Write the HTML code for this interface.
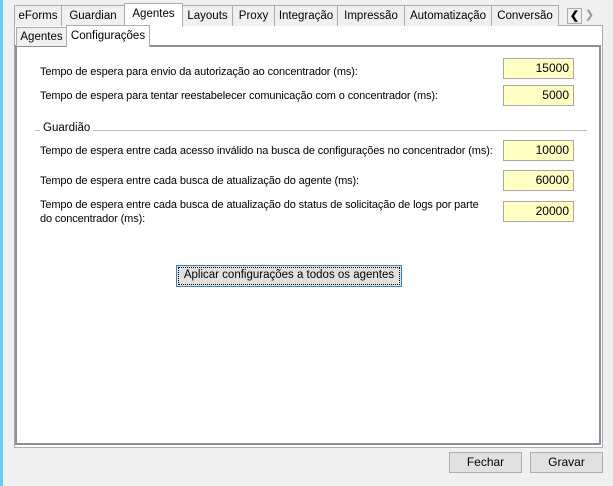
<!DOCTYPE html>
<html><head><style>
body{margin:0;width:613px;height:486px;background:#f0f0f0;position:relative;overflow:hidden;font-family:"Liberation Sans",sans-serif;font-size:11px;color:#000}
div{position:absolute;box-sizing:border-box;white-space:nowrap}
.tab{top:5px;height:21px;border:1px solid #acacac;border-bottom:none;background:#f0f0f0;text-align:center;line-height:20px;font-size:11.5px}
.sel{background:#fff;top:3px;height:24px;z-index:2;line-height:20px}
.lbl{left:40px;font-size:11px;letter-spacing:-0.12px}
.tb{left:503px;width:71px;height:21px;background:#ffffc4;border:1px solid #a8a8a8;text-align:right;padding-right:4px;line-height:19px;font-size:12px}
.btn{background:#e1e1e1;border:1px solid #adadad;text-align:center;line-height:19px;font-size:12px}
</style></head><body>
<div style="left:0;top:0;width:3px;height:486px;background:#5fd0f0"></div>
<div style="left:14px;top:25px;width:589px;height:423px;background:#fff;border:1px solid #acacac"></div>
<div class="tab" style="left:14px;width:48px">eForms</div>
<div class="tab" style="left:61px;width:64px">Guardian</div>
<div class="tab sel" style="left:124px;width:59px">Agentes</div>
<div class="tab" style="left:182px;width:51px">Layouts</div>
<div class="tab" style="left:232px;width:43px">Proxy</div>
<div class="tab" style="left:274px;width:64px">Integração</div>
<div class="tab" style="left:337px;width:68px">Impressão</div>
<div class="tab" style="left:404px;width:88px">Automatização</div>
<div class="tab" style="left:491px;width:68px">Conversão</div>
<div style="left:567px;top:8px;width:15px;height:16px;border:1px solid #acacac;background:#f0f0f0;font-size:11px;line-height:14px;text-align:center;font-weight:bold">&#10094;</div>
<div style="left:582px;top:8px;width:15px;height:16px;font-size:11px;line-height:14px;text-align:center;color:#999">&#10095;</div>
<div style="left:15px;top:45px;width:586px;height:400px;border:2px solid #8a8f9a;background:#fff"></div>
<div class="tab" style="left:16px;top:27px;height:19px;width:51px;line-height:19px">Agentes</div>
<div class="tab sel" style="left:66px;top:25px;height:22px;width:84px;line-height:20px">Configurações</div>
<div class="lbl" style="top:66px">Tempo de espera para envio da autorização ao concentrador (ms):</div>
<div class="lbl" style="top:90px">Tempo de espera para tentar reestabelecer comunicação com o concentrador (ms):</div>
<div style="left:35px;top:130px;width:552px;height:1px;background:#bdbdbd"></div>
<div style="left:40px;top:122px;padding:0 3px;background:#fff;font-size:11.5px">Guardião</div>
<div class="lbl" style="top:145px">Tempo de espera entre cada acesso inválido na busca de configurações no concentrador (ms):</div>
<div class="lbl" style="top:175px">Tempo de espera entre cada busca de atualização do agente (ms):</div>
<div class="lbl" style="top:198px;line-height:14px">Tempo de espera entre cada busca de atualização do status de solicitação de logs por parte<br>do concentrador (ms):</div>
<div class="tb" style="top:58px">15000</div>
<div class="tb" style="top:85px">5000</div>
<div class="tb" style="top:140px">10000</div>
<div class="tb" style="top:170px">60000</div>
<div class="tb" style="top:201px">20000</div>
<div class="btn" style="left:176px;top:265px;width:226px;height:22px;border:1px solid #3c7fb1;outline:1px dotted #000;outline-offset:-3px;font-size:11.5px">Aplicar configurações a todos os agentes</div>
<div class="btn" style="left:449px;top:452px;width:73px;height:21px">Fechar</div>
<div class="btn" style="left:530px;top:452px;width:73px;height:21px">Gravar</div>
</body></html>
